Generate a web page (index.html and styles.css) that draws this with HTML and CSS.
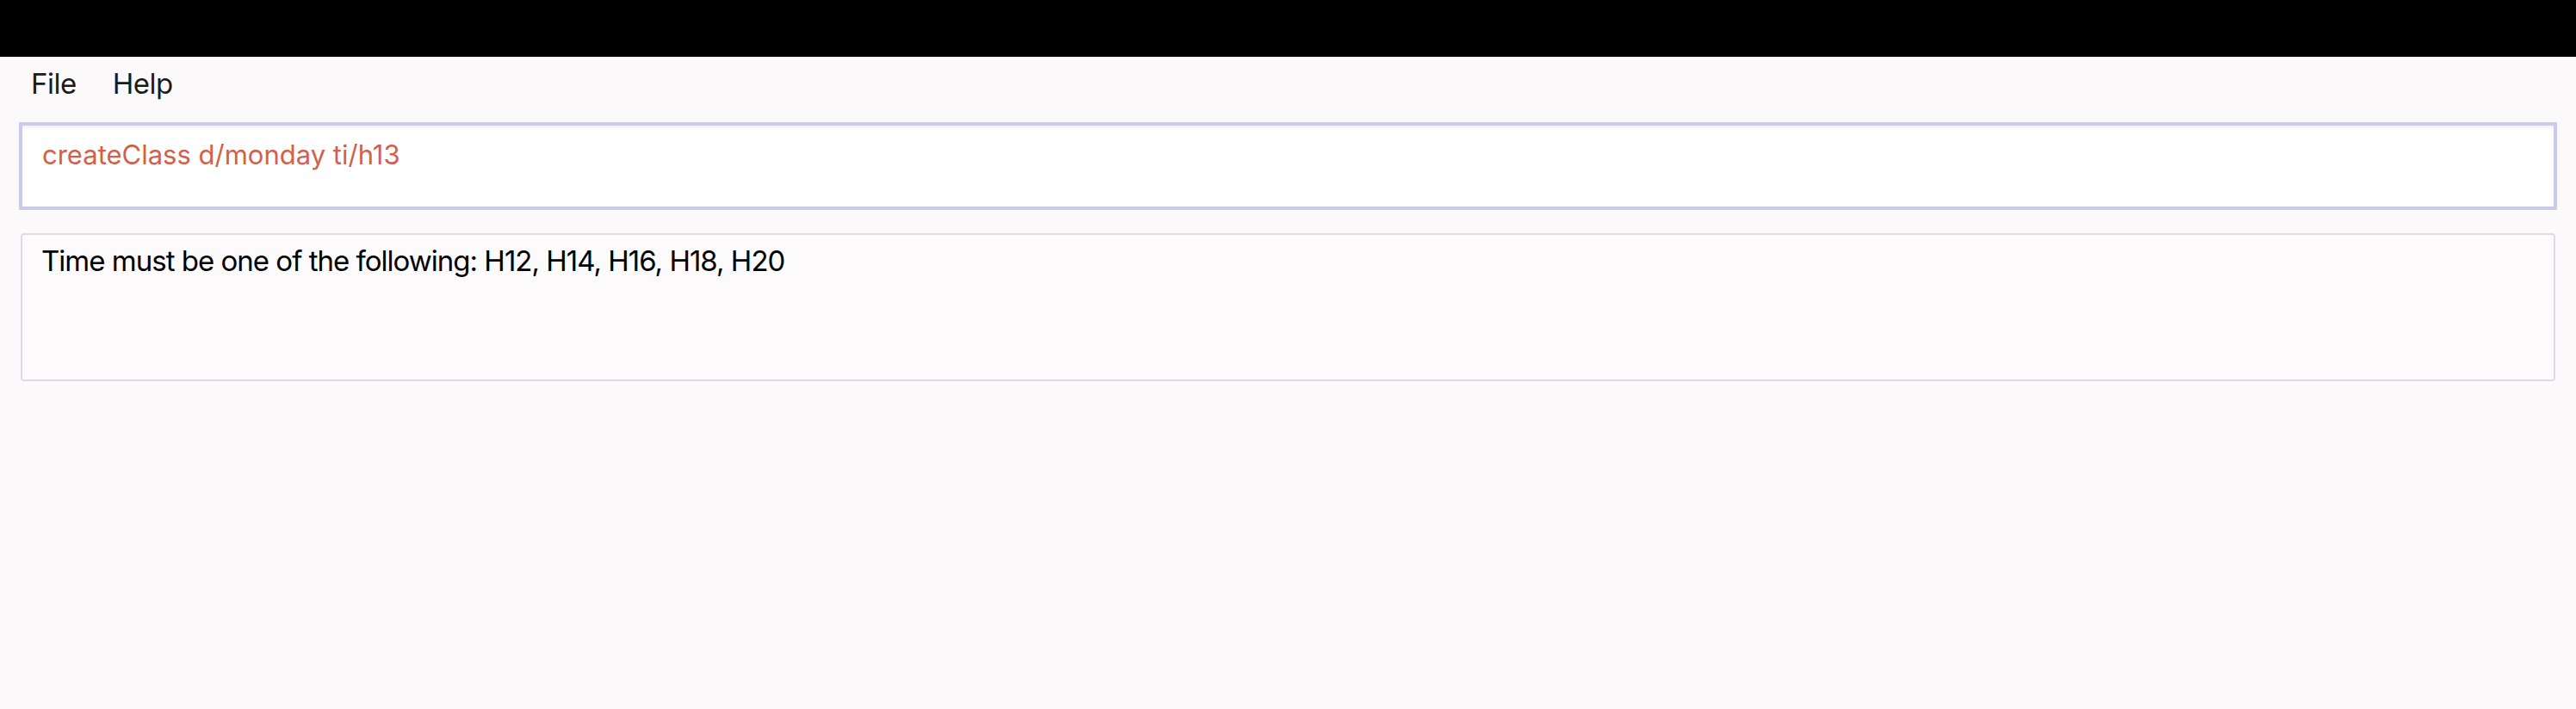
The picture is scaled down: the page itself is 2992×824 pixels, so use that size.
FILE: index.html
```html
<!DOCTYPE html>
<html lang="en">
<head>
<meta charset="utf-8">
<title>App</title>
<link rel="stylesheet" href="styles.css">
</head>
<body>
<div class="titlebar"></div>
<nav class="menubar">
  <span class="menu-item">File</span>
  <span class="menu-item">Help</span>
</nav>
<div class="command-box">
  <div class="command-text">createClass d/monday ti/h13</div>
</div>
<div class="result-box">
  <div class="result-text">Time must be one of the following: H12, H14, H16, H18, H20</div>
</div>
</body>
</html>
```
FILE: styles.css
```css
html, body {
  margin: 0;
  padding: 0;
}
body {
  width: 2992px;
  height: 824px;
  background: #fbf9fa;
  font-family: Inter, "Noto Sans", sans-serif;
  overflow: hidden;
}
.titlebar {
  height: 66px;
  background: #000;
}
.menubar {
  box-sizing: border-box;
  height: 76px;
  padding: 15px 0 0 36px;
  display: flex;
  gap: 42px;
  align-items: flex-start;
}
.menu-item {
  font-size: 33px;
  line-height: 33px;
  color: #1b1b1b;
  letter-spacing: -0.015em;
}
.command-box {
  box-sizing: border-box;
  margin: 0 22px;
  height: 102px;
  border: 4px solid #c9cbe9;
  background: #ffffff;
  box-shadow: inset 0 5px 5px -3px rgba(0, 0, 0, 0.07);
  padding: 18px 0 0 23px;
}
.command-text {
  font-size: 31px;
  line-height: 31px;
  color: #d3604b;
  letter-spacing: 0;
}
.result-box {
  box-sizing: border-box;
  margin: 27px 24px 0;
  height: 172px;
  border: 2px solid #dddce1;
  border-radius: 4px;
  background: #fcfafb;
  padding: 14px 0 0 22px;
}
.result-text {
  font-size: 33px;
  line-height: 33px;
  color: #000;
  letter-spacing: -0.03em;
}
```
